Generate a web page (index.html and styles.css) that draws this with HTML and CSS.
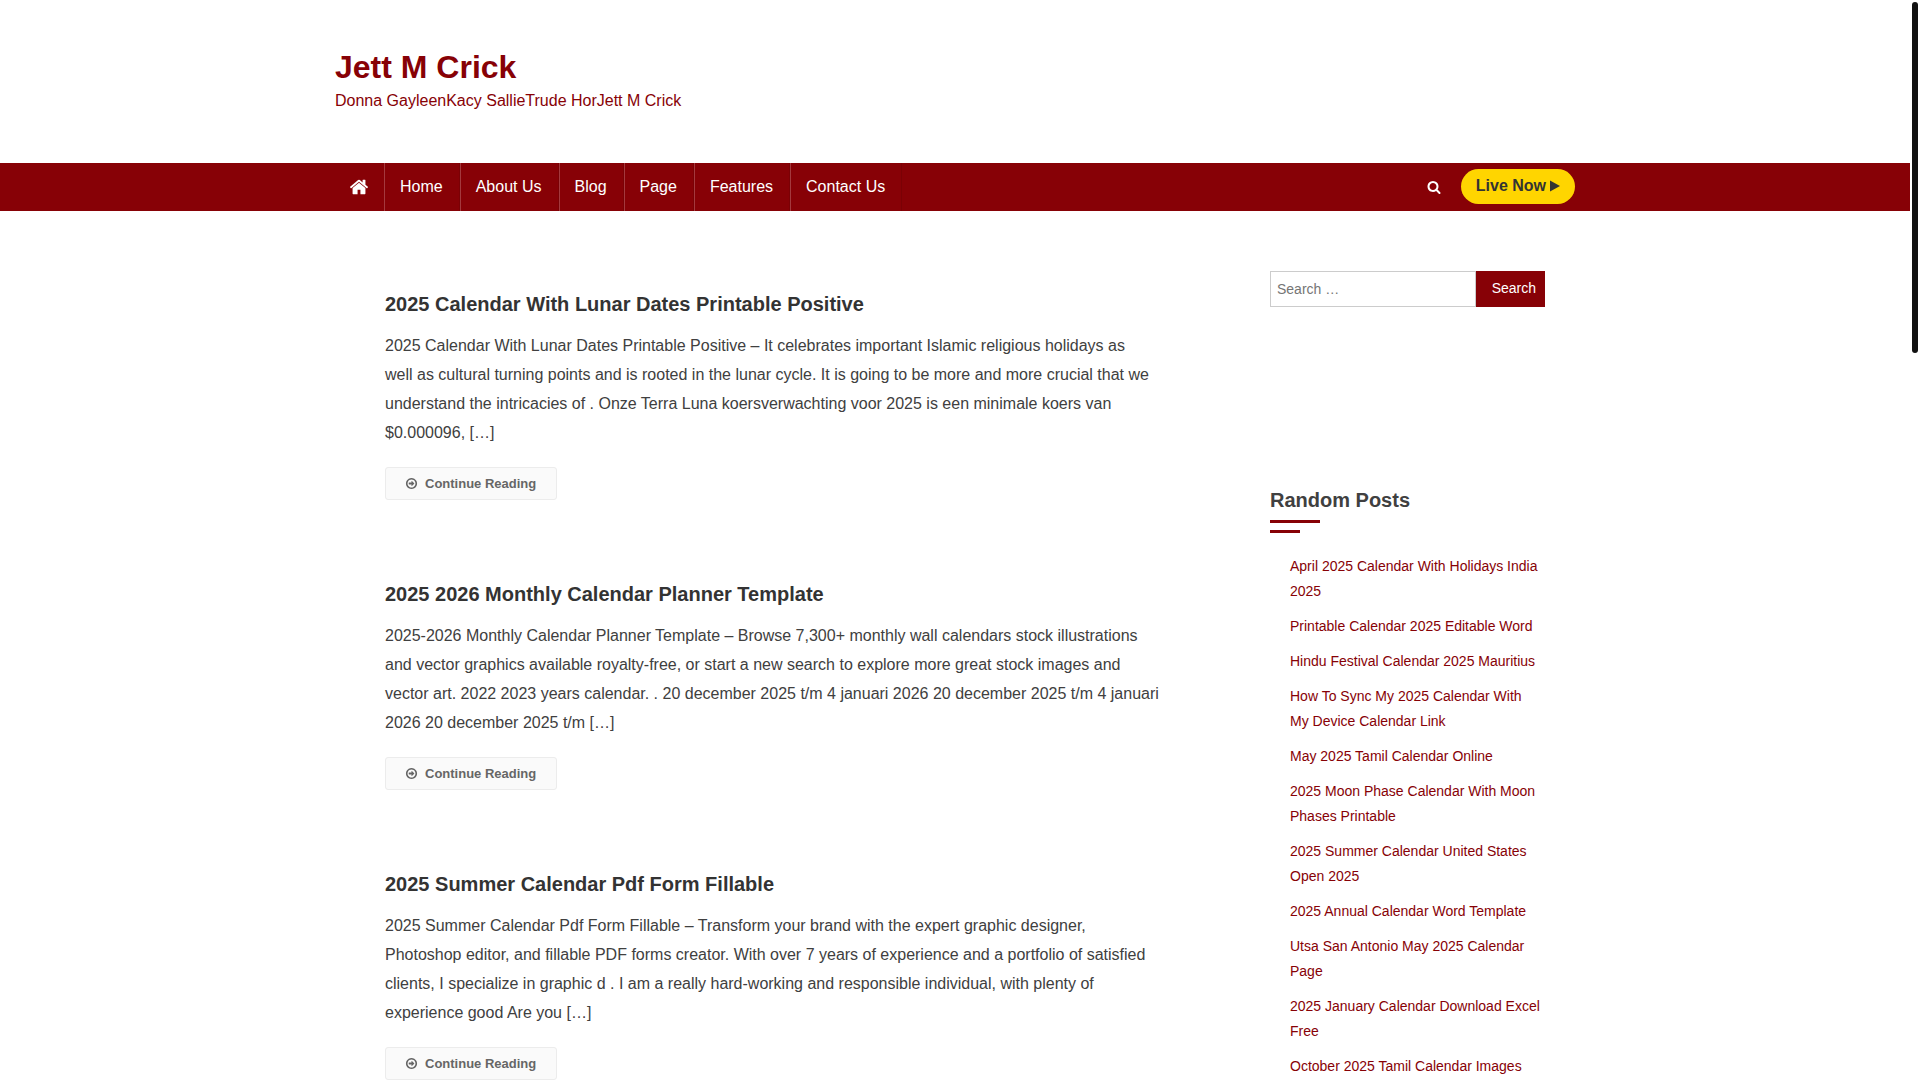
FILE: index.html
```html
<!DOCTYPE html>
<html lang="en">
<head>
  <meta charset="UTF-8">
  <meta name="viewport" content="width=device-width, initial-scale=1.0">
  <title>Jett M Crick</title>
  <link rel="stylesheet" href="styles.css">
</head>
<body>

  <!-- Shared icon shapes -->
  <svg class="icon-defs" width="0" height="0" aria-hidden="true">
    <symbol id="icon-arrow" viewBox="0 0 1792 1792">
      <path d="M1280 896q0 14-9 23l-320 320q-9 9-23 9-13 0-22.5-9.5t-9.5-22.5v-192h-352q-13 0-22.5-9.5t-9.5-22.5v-192q0-13 9.5-22.5t22.5-9.5h352v-192q0-14 9-23t23-9q12 0 24 10l319 319q9 9 9 23zm160 0q0-148-73-273t-198-198-273-73-273 73-198 198-73 273 73 273 198 198 273 73 273-73 198-198 73-273zm224 0q0 209-103 385.5t-279.5 279.5-385.5 103-385.5-103-279.5-279.5-103-385.5 103-385.5 279.5-279.5 385.5-103 385.5 103 279.5 279.5 103 385.5z"/>
    </symbol>
  </svg>

  <header class="site-header">
    <div class="container">
      <h1 class="site-title"><a href="#">Jett M Crick</a></h1>
      <p class="site-description">Donna GayleenKacy SallieTrude HorJett M Crick</p>
    </div>
  </header>

  <!-- Main menu -->
  <nav class="main-nav">
    <div class="container nav-inner">
      <a class="home-icon" href="#" aria-label="Home page">
        <svg width="20" height="20" viewBox="0 0 1792 1792"><path d="M1472 992v480q0 26-19 45t-45 19h-384v-384h-256v384h-384q-26 0-45-19t-19-45v-480q0-1 .5-3t.5-3l575-474 575 474q1 2 1 6zm223-69l-62 74q-8 9-21 11h-3q-13 0-21-7l-692-577-692 577q-12 8-24 7-13-2-21-11l-62-74q-8-10-7-23.5t11-21.5l719-599q32-26 76-26t76 26l244 204v-195q0-14 9-23t23-9h192q14 0 23 9t9 23v408l219 182q10 8 11 21.5t-7 23.5z"/></svg>
      </a>
      <ul class="menu">
        <li><a href="#">Home</a></li>
        <li><a href="#">About Us</a></li>
        <li><a href="#">Blog</a></li>
        <li><a href="#">Page</a></li>
        <li><a href="#">Features</a></li>
        <li><a href="#">Contact Us</a></li>
      </ul>
      <div class="nav-right">
        <button class="search-toggle" type="button" aria-label="Open search">
          <svg width="14" height="14" viewBox="0 0 1792 1792"><path d="M1216 832q0-185-131.5-316.5t-316.5-131.5-316.5 131.5-131.5 316.5 131.5 316.5 316.5 131.5 316.5-131.5 131.5-316.5zm512 832q0 52-38 90t-90 38q-54 0-90-38l-343-342q-179 124-399 124-143 0-273.5-55.5t-225-150-150-225-55.5-273.5 55.5-273.5 150-225 225-150 273.5-55.5 273.5 55.5 225 150 150 225 55.5 273.5q0 220-124 399l343 343q37 37 37 90z"/></svg>
        </button>
        <a class="live-now" href="#">Live Now
          <svg width="10" height="12" viewBox="0 0 10 12"><path d="M0 0.5L10 6L0 11.5z"/></svg>
        </a>
      </div>
    </div>
  </nav>

  <div class="container content">
    <main class="posts">
      <article class="post">
        <h2 class="post-title"><a href="#">2025 Calendar With Lunar Dates Printable Positive</a></h2>
        <p>2025 Calendar With Lunar Dates Printable Positive – It celebrates important Islamic religious holidays as<br> well as cultural turning points and is rooted in the lunar cycle. It is going to be more and more crucial that we understand the intricacies of . Onze Terra Luna koersverwachting voor 2025 is een minimale koers van $0.000096, […]</p>
        <a class="read-more" href="#"><svg width="13" height="13"><use href="#icon-arrow"/></svg>Continue Reading</a>
      </article>

      <article class="post">
        <h2 class="post-title"><a href="#">2025 2026 Monthly Calendar Planner Template</a></h2>
        <p>2025-2026 Monthly Calendar Planner Template – Browse 7,300+ monthly wall calendars stock illustrations and vector graphics available royalty-free, or start a new search to explore more great stock images and vector art. 2022 2023 years calendar. . 20 december 2025 t/m 4 januari 2026 20 december 2025 t/m 4 januari 2026 20 december 2025 t/m […]</p>
        <a class="read-more" href="#"><svg width="13" height="13"><use href="#icon-arrow"/></svg>Continue Reading</a>
      </article>

      <article class="post">
        <h2 class="post-title"><a href="#">2025 Summer Calendar Pdf Form Fillable</a></h2>
        <p>2025 Summer Calendar Pdf Form Fillable – Transform your brand with the expert graphic designer, Photoshop editor, and fillable PDF forms creator. With over 7 years of experience and a portfolio of satisfied clients, I specialize in graphic d . I am a really hard-working and responsible individual, with plenty of experience good Are you […]</p>
        <a class="read-more" href="#"><svg width="13" height="13"><use href="#icon-arrow"/></svg>Continue Reading</a>
      </article>
    </main>

    <aside class="sidebar">
      <form class="search-form">
        <input type="search" placeholder="Search …" aria-label="Search for">
        <button type="submit">Search</button>
      </form>

      <section class="widget">
        <h2 class="widget-title">Random Posts</h2>
        <ul>
          <li><a href="#">April 2025 Calendar With Holidays India 2025</a></li>
          <li><a href="#">Printable Calendar 2025 Editable Word</a></li>
          <li><a href="#">Hindu Festival Calendar 2025 Mauritius</a></li>
          <li><a href="#">How To Sync My 2025 Calendar With My&nbsp;Device Calendar Link</a></li>
          <li><a href="#">May 2025 Tamil Calendar Online</a></li>
          <li><a href="#">2025 Moon Phase Calendar With Moon Phases Printable</a></li>
          <li><a href="#">2025 Summer Calendar United States Open 2025</a></li>
          <li><a href="#">2025 Annual Calendar Word Template</a></li>
          <li><a href="#">Utsa San Antonio May 2025 Calendar Page</a></li>
          <li><a href="#">2025 January Calendar Download Excel Free</a></li>
          <li><a href="#">October 2025 Tamil Calendar Images</a></li>
        </ul>
      </section>
    </aside>
  </div>

  <div class="scroll-thumb"></div>

</body>
</html>
```

FILE: styles.css
```css
* {
  box-sizing: border-box;
}

html {
  overflow: hidden;
}

body {
  margin: 0;
  padding-right: 10px; /* Room for the scroll bar */
  font-family: "Liberation Sans", Arial, sans-serif;
  font-size: 16px;
  line-height: 29px;
  color: #404040;
  background-color: #fff;
}

a {
  color: #870106;
  text-decoration: none;
}

h1, h2, p, ul {
  margin: 0;
  padding: 0;
}

ul {
  list-style: none;
}

svg {
  display: block;
  fill: currentColor;
}

.icon-defs {
  position: absolute;
}

.container {
  max-width: 1240px;
  margin: 0 auto;
}

/* Header */
.site-header {
  padding: 48px 0;
  color: #870106;
}

.site-title {
  font-size: 32px;
  line-height: 38px;
}

/* Main menu */
.main-nav {
  background-color: #870106;
}

.nav-inner {
  display: flex;
  height: 48px;
}

.home-icon {
  display: flex;
  align-items: center;
  width: 49px;
  padding-left: 14px;
  color: #fff;
}

.menu {
  display: flex;
}

.menu a {
  display: block;
  padding: 0 16px 0 15px;
  line-height: 48px;
  color: #fff;
  border-left: 1px solid #a4393d;
  border-right: 1px solid #7a0105;
}

.nav-right {
  display: flex;
  align-items: center;
  gap: 20px;
  margin-left: auto;
}

.search-toggle {
  padding: 0;
  border: none;
  background: none;
  color: #fff;
  cursor: pointer;
}

.live-now {
  display: flex;
  align-items: center;
  gap: 4px;
  margin-bottom: 1px;
  padding: 0 15px 1px;
  line-height: 34px;
  font-weight: bold;
  color: #333;
  background-color: #ffd500;
  border-radius: 30px;
}

/* Content and sidebar */
.content {
  display: flex;
  justify-content: space-between;
  padding: 60px 30px 60px 50px;
}

.posts {
  flex: 0 1 776px;
  padding-top: 20px;
}

.post {
  margin-bottom: 81px;
}

.post-title {
  margin-bottom: 14px;
  font-size: 20px;
  line-height: 26px;
}

.post-title a {
  color: #333;
}

.read-more {
  display: inline-flex;
  align-items: center;
  gap: 7px;
  margin-top: 20px;
  padding: 0 20px 0 19px;
  font-size: 13px;
  line-height: 31px;
  font-weight: bold;
  color: #666;
  background-color: #fafafa;
  border: 1px solid #ececec;
  border-radius: 3px;
}

.sidebar {
  flex: 0 0 275px;
}

.search-form {
  display: flex;
  height: 36px;
  margin-bottom: 180px;
}

.search-form input {
  flex: 1;
  min-width: 0;
  padding: 0 6px;
  font: inherit;
  font-size: 14px;
  border: 1px solid #ccc;
  border-radius: 0;
}

.search-form button {
  padding: 0 9px 2px 16px;
  font: inherit;
  font-size: 14px;
  color: #fff;
  background-color: #870106;
  border: none;
  cursor: pointer;
}

/* Widget title with two short lines below it */
.widget-title {
  display: flex;
  flex-direction: column;
  gap: 7px;
  margin-bottom: 21px;
  font-size: 20px;
  line-height: 26px;
}

.widget-title::before,
.widget-title::after {
  content: "";
  order: 1;
  width: 50px;
  height: 3px;
  background-color: #870106;
}

.widget-title::after {
  width: 30px;
}

.widget li {
  margin-bottom: 10px;
  padding-left: 20px;
  font-size: 14px;
  line-height: 25px;
}

/* Scroll bar */
.scroll-thumb {
  position: fixed;
  top: 2px;
  right: 2px;
  width: 6px;
  height: 351px;
  background-color: #111;
  border-radius: 3px;
}
```
